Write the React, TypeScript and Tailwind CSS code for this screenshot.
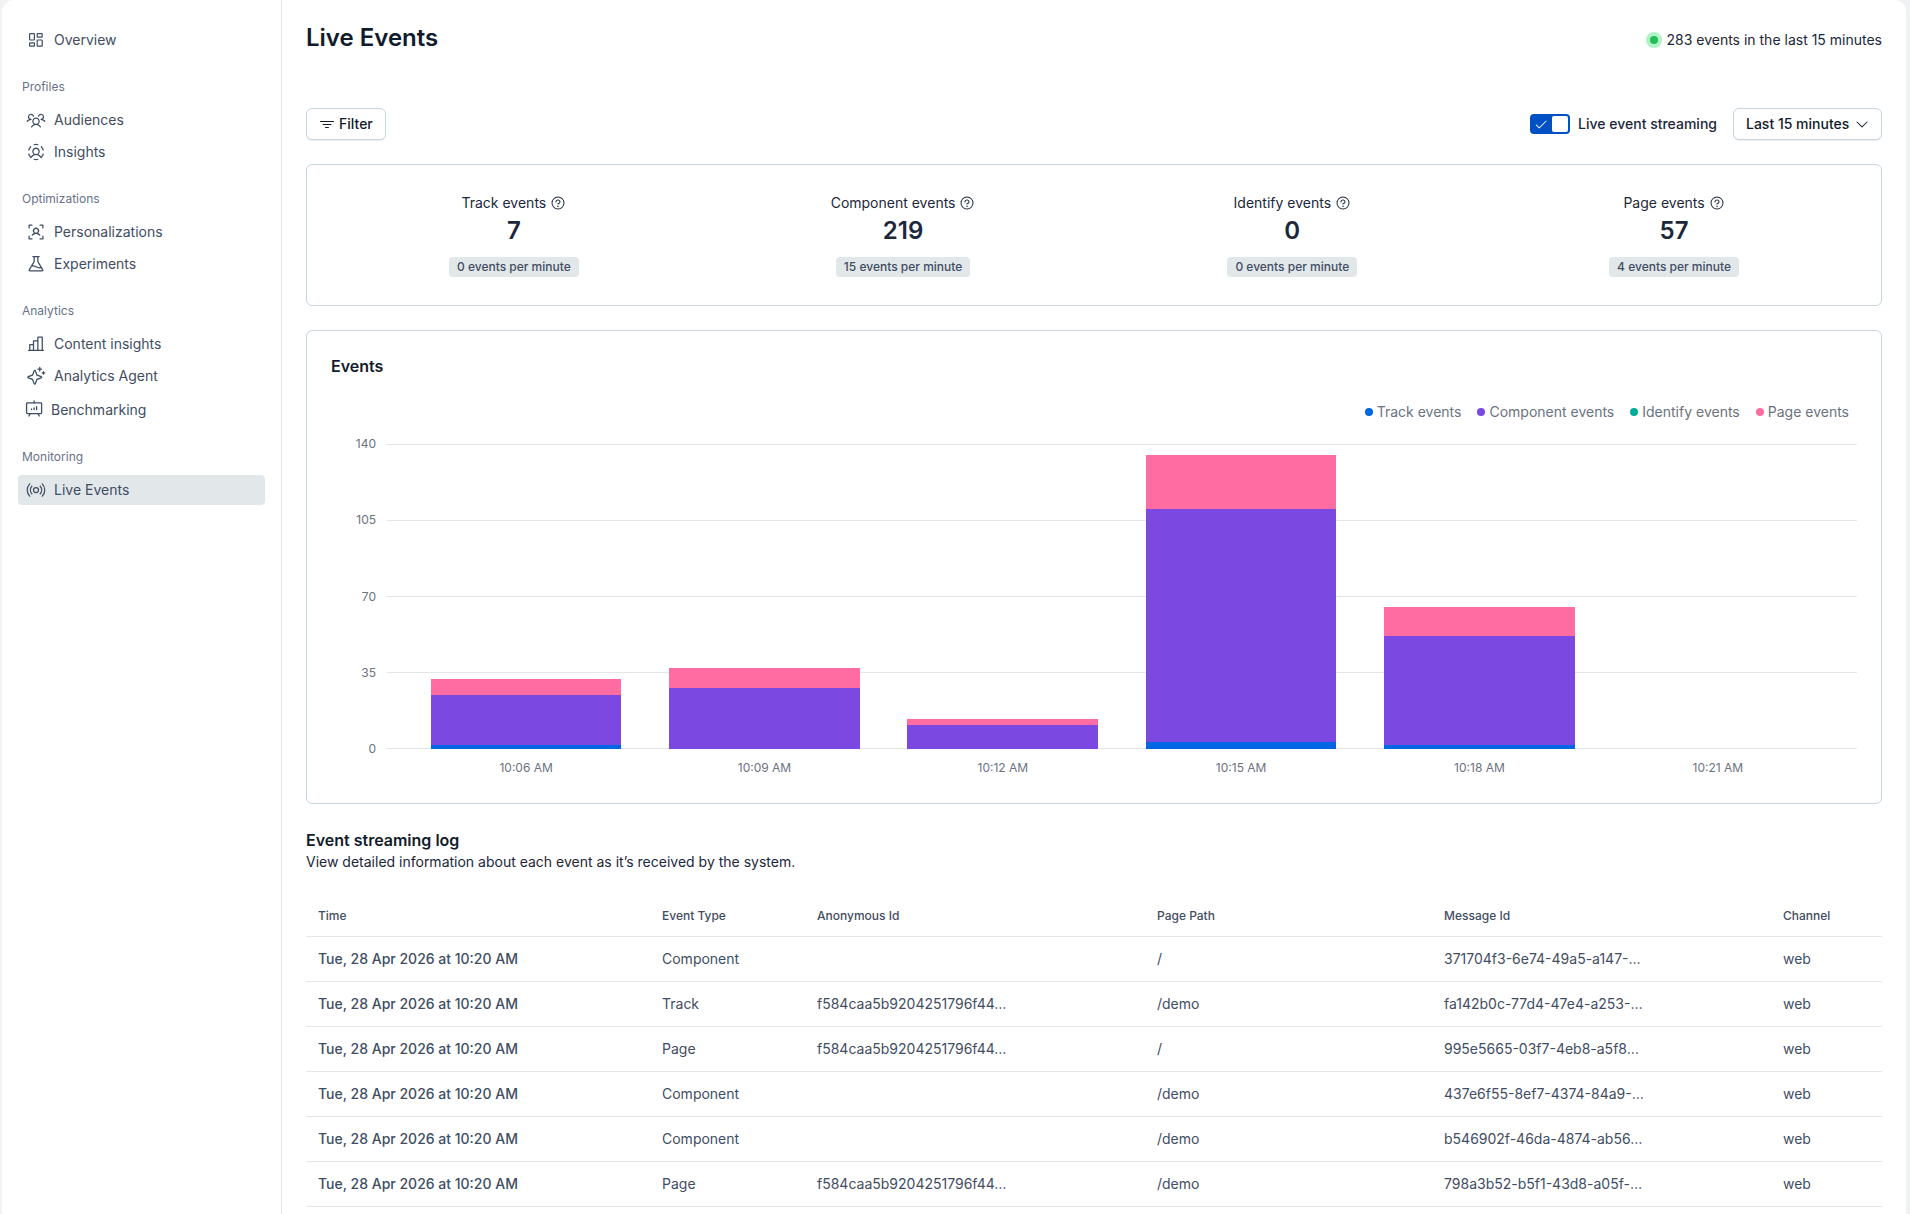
import { useState, type ReactNode } from "react";
import clsx from "clsx";
import {
  PiBroadcast,
  PiCaretDown,
  PiChartBar,
  PiCheck,
  PiFlask,
  PiFunnelSimple,
  PiQuestion,
  PiSparkle,
  PiUserCircleDashed,
  PiUserFocus,
  PiUsersThree,
} from "react-icons/pi";

type NavItem = { label: string; icon: ReactNode; active?: boolean; className?: string };
type NavGroup = { title?: string; items: NavItem[] };

function DashboardIcon() {
  return (
    <svg width="20" height="20" viewBox="0 0 20 20" fill="none" stroke="currentColor" strokeWidth="1.2" aria-hidden="true">
      <rect x="3.6" y="3.6" width="4.8" height="6.4" rx="0.5" />
      <rect x="11.2" y="3.6" width="5" height="3.6" rx="0.5" />
      <rect x="3.6" y="12.8" width="4.8" height="3.4" rx="0.5" />
      <rect x="11.2" y="10" width="5" height="6.2" rx="0.5" />
    </svg>
  );
}

function EaselIcon() {
  return (
    <svg
      width="20"
      height="20"
      viewBox="0 0 20 20"
      fill="none"
      stroke="currentColor"
      strokeWidth="1.3"
      strokeLinecap="round"
      strokeLinejoin="round"
      aria-hidden="true"
    >
      <rect x="2.6" y="2.8" width="15" height="10.8" rx="0.8" />
      <path d="M10.1 2.8V0.9M6.2 13.6 4.9 16M14 13.6l1.3 2.4" />
      <path d="M7.6 9.6V8.9M10.1 9.6V7.8M12.6 9.6V6.6" />
    </svg>
  );
}

const NAV: NavGroup[] = [
  { items: [{ label: "Overview", icon: <DashboardIcon /> }] },
  {
    title: "Profiles",
    items: [
      { label: "Audiences", icon: <PiUsersThree size={20} /> },
      { label: "Insights", icon: <PiUserCircleDashed size={20} /> },
    ],
  },
  {
    title: "Optimizations",
    items: [
      { label: "Personalizations", icon: <PiUserFocus size={20} /> },
      { label: "Experiments", icon: <PiFlask size={20} /> },
    ],
  },
  {
    title: "Analytics",
    items: [
      { label: "Content insights", icon: <PiChartBar size={20} /> },
      { label: "Analytics Agent", icon: <PiSparkle size={20} /> },
      { label: "Benchmarking", icon: <EaselIcon />, className: "mt-0.5 pl-1.5 gap-[7px]" },
    ],
  },
  {
    title: "Monitoring",
    items: [{ label: "Live Events", icon: <PiBroadcast size={20} />, active: true }],
  },
];

const STATS = [
  { label: "Track events", value: 7, rate: "0 events per minute" },
  { label: "Component events", value: 219, rate: "15 events per minute" },
  { label: "Identify events", value: 0, rate: "0 events per minute" },
  { label: "Page events", value: 57, rate: "4 events per minute" },
];

const SERIES = [
  { key: "track", label: "Track events", color: "bg-[#0066e3]" },
  { key: "component", label: "Component events", color: "bg-[#7b49e2]" },
  { key: "identify", label: "Identify events", color: "bg-[#00ad98]" },
  { key: "page", label: "Page events", color: "bg-[#ff6ca2]" },
] as const;

const Y_MAX = 140;
const Y_TICKS = [140, 105, 70, 35, 0];

const BUCKETS = [
  { time: "10:06 AM", track: 2, component: 23, identify: 0, page: 7 },
  { time: "10:09 AM", track: 0, component: 28, identify: 0, page: 9 },
  { time: "10:12 AM", track: 0, component: 11, identify: 0, page: 3 },
  { time: "10:15 AM", track: 3, component: 107, identify: 0, page: 25 },
  { time: "10:18 AM", track: 2, component: 50, identify: 0, page: 13 },
  { time: "10:21 AM", track: 0, component: 0, identify: 0, page: 0 },
];

const COLUMNS = [
  { label: "Time", width: "w-[344px]" },
  { label: "Event Type", width: "w-[155px]" },
  { label: "Anonymous Id", width: "w-[340px]" },
  { label: "Page Path", width: "w-[287px]" },
  { label: "Message Id", width: "w-[339px]" },
  { label: "Channel", width: "w-[111px]" },
];

const TIME = "Tue, 28 Apr 2026 at 10:20 AM";
const ANON = "f584caa5b9204251796f44…";

const ROWS = [
  { type: "Component", anon: "", path: "/", message: "371704f3-6e74-49a5-a147-…" },
  { type: "Track", anon: ANON, path: "/demo", message: "fa142b0c-77d4-47e4-a253-…" },
  { type: "Page", anon: ANON, path: "/", message: "995e5665-03f7-4eb8-a5f8…" },
  { type: "Component", anon: "", path: "/demo", message: "437e6f55-8ef7-4374-84a9-…" },
  { type: "Component", anon: "", path: "/demo", message: "b546902f-46da-4874-ab56…" },
  { type: "Page", anon: ANON, path: "/demo", message: "798a3b52-b5f1-43d8-a05f-…" },
];

function Sidebar() {
  return (
    <aside className="w-[280px] shrink-0 border-r border-[#e2e5e9] px-4 pt-[25px]">
      <nav aria-label="Main navigation" className="flex flex-col gap-6">
        {NAV.map((group, i) => (
          <div key={group.title ?? i}>
            {group.title && (
              <h2 className="mb-2.5 pl-1 text-xs text-[#67728a]">{group.title}</h2>
            )}
            <ul className="flex flex-col gap-0.5">
              {group.items.map((item) => (
                <li key={item.label}>
                  <a
                    href="#"
                    aria-current={item.active ? "page" : undefined}
                    className={clsx(
                      "flex h-[30px] items-center rounded text-sm text-[#414d63]",
                      item.active && "bg-[#e2e7ea]",
                      item.className ?? "gap-2 pl-2"
                    )}
                  >
                    {item.icon}
                    {item.label}
                  </a>
                </li>
              ))}
            </ul>
          </div>
        ))}
      </nav>
    </aside>
  );
}

function Toolbar() {
  const [streaming, setStreaming] = useState(true);

  return (
    <div className="mt-[50px] flex items-center justify-between">
      <button
        type="button"
        className="flex h-8 items-center gap-1 rounded-md border border-[#c8d6df] bg-white px-3 text-sm font-medium text-[#111b2b] shadow-[0_1px_0_rgba(25,37,50,0.08)]"
      >
        <PiFunnelSimple size={16} />
        Filter
      </button>

      <div className="flex items-center gap-4">
        <label className="flex items-center gap-2 text-sm font-medium text-[#1b273a]">
          <input
            type="checkbox"
            role="switch"
            checked={streaming}
            onChange={(e) => setStreaming(e.target.checked)}
            className="peer sr-only"
          />
          <span
            aria-hidden="true"
            className={clsx(
              "flex h-5 w-10 items-center justify-between rounded p-0.5",
              streaming ? "bg-[#0050c5]" : "flex-row-reverse bg-[#8091a5]"
            )}
          >
            <PiCheck size={14} className={clsx("ml-0.5 text-white", !streaming && "invisible")} />
            <span className="h-4 w-4 rounded-xs bg-white" />
          </span>
          Live event streaming
        </label>

        <div className="relative">
          <select
            aria-label="Time range"
            className="h-8 w-[149px] appearance-none rounded-md border border-[#c8d6df] bg-white pl-3 text-sm font-medium text-[#111b2b] shadow-[0_1px_0_rgba(25,37,50,0.08)]"
          >
            <option>Last 15 minutes</option>
          </select>
          <PiCaretDown size={16} className="pointer-events-none absolute right-3 top-2 text-[#111b2b]" />
        </div>
      </div>
    </div>
  );
}

function StatsCard() {
  return (
    <section className="mt-6 flex justify-around rounded-md border border-[#c8d6df] px-4 py-7">
      {STATS.map((stat) => (
        <div key={stat.label} className="flex flex-col items-center">
          <div className="flex items-center gap-1 text-sm text-[#1b273a]">
            {stat.label}
            <PiQuestion size={16} />
          </div>
          <div className="text-2xl leading-9 font-semibold text-[#1b273a]">{stat.value}</div>
          <div className="mt-2 rounded bg-[#e2e7ea] px-2 text-xs leading-5 font-medium text-[#414d63]">
            {stat.rate}
          </div>
        </div>
      ))}
    </section>
  );
}

function EventsChart() {
  return (
    <section className="mt-6 rounded-md border border-[#c8d6df] px-6 pt-[23px] pb-[27px]">
      <h2 className="text-base leading-6 font-semibold text-[#111b2b]">Events</h2>

      <ul className="mt-6 flex justify-end gap-4 pr-2 text-sm text-[#6b7280]">
        {SERIES.map((s) => (
          <li key={s.key} className="flex items-center gap-1">
            <span className={clsx("h-2 w-2 rounded-full", s.color)} />
            {s.label}
          </li>
        ))}
      </ul>

      <div className="mt-[22px] grid grid-cols-[45px_1fr] gap-x-[11px]">
        <div className="-my-2 flex h-[321px] flex-col justify-between text-right text-xs text-[#6b7280]">
          {Y_TICKS.map((tick) => (
            <span key={tick}>{tick}</span>
          ))}
        </div>

        <div className="grid h-[305px]">
          <div className="col-start-1 row-start-1 flex flex-col justify-between">
            {Y_TICKS.map((tick) => (
              <div key={tick} className="h-px bg-[#e4e6ea]" />
            ))}
          </div>
          <div className="col-start-1 row-start-1 flex px-5">
            {BUCKETS.map((bucket) => (
              <div key={bucket.time} className="flex flex-1 flex-col-reverse items-center">
                {SERIES.map((s) => (
                  <div
                    key={s.key}
                    className={clsx("w-4/5", s.color)}
                    style={{ height: `${(bucket[s.key] / Y_MAX) * 100}%` }}
                  />
                ))}
              </div>
            ))}
          </div>
        </div>

        <div className="col-start-2 mt-[11px] flex px-5 text-xs text-[#6b7280]">
          {BUCKETS.map((bucket) => (
            <span key={bucket.time} className="flex-1 text-center">
              {bucket.time}
            </span>
          ))}
        </div>
      </div>
    </section>
  );
}

function EventLog() {
  return (
    <section className="mt-6">
      <h2 className="text-base leading-6 font-semibold text-[#111b2b]">Event streaming log</h2>
      <p className="text-sm text-[#1b273a]">
        View detailed information about each event as it’s received by the system.
      </p>

      <table className="mt-6 w-full table-fixed border-collapse text-left text-sm text-[#414d63]">
        <thead>
          <tr className="h-10 border-b border-[#e1e7ea] text-xs">
            {COLUMNS.map((col) => (
              <th key={col.label} scope="col" className={clsx("px-3 font-medium", col.width)}>
                {col.label}
              </th>
            ))}
          </tr>
        </thead>
        <tbody>
          {ROWS.map((row, i) => (
            <tr key={i} className="h-[45px] border-b border-[#e1e7ea]">
              <td className="px-3 font-medium">{TIME}</td>
              <td className="px-3">{row.type}</td>
              <td className="px-3">{row.anon}</td>
              <td className="px-3">{row.path}</td>
              <td className="px-3">{row.message}</td>
              <td className="px-3">web</td>
            </tr>
          ))}
        </tbody>
      </table>
    </section>
  );
}

export default function App() {
  return (
    <div className="min-h-screen bg-[#f1f2f4] pr-1 pl-0.5 font-['Inter','Liberation_Sans',sans-serif]">
      <div className="flex min-h-screen rounded-t-xl bg-white">
        <Sidebar />
        <main className="min-w-0 flex-1 px-6 pt-5">
          <header className="flex items-start justify-between">
            <h1 className="text-2xl leading-9 font-semibold text-[#111b2b]">Live Events</h1>
            <div className="flex h-[38px] items-center gap-1 pt-0.5 text-sm text-[#1b273a]">
              <span className="flex h-4 w-4 items-center justify-center rounded-full bg-[#aff3c6]">
                <span className="h-2 w-2 rounded-full bg-[#21bf56]" />
              </span>
              283 events in the last 15 minutes
            </div>
          </header>
          <Toolbar />
          <StatsCard />
          <EventsChart />
          <EventLog />
        </main>
      </div>
    </div>
  );
}
